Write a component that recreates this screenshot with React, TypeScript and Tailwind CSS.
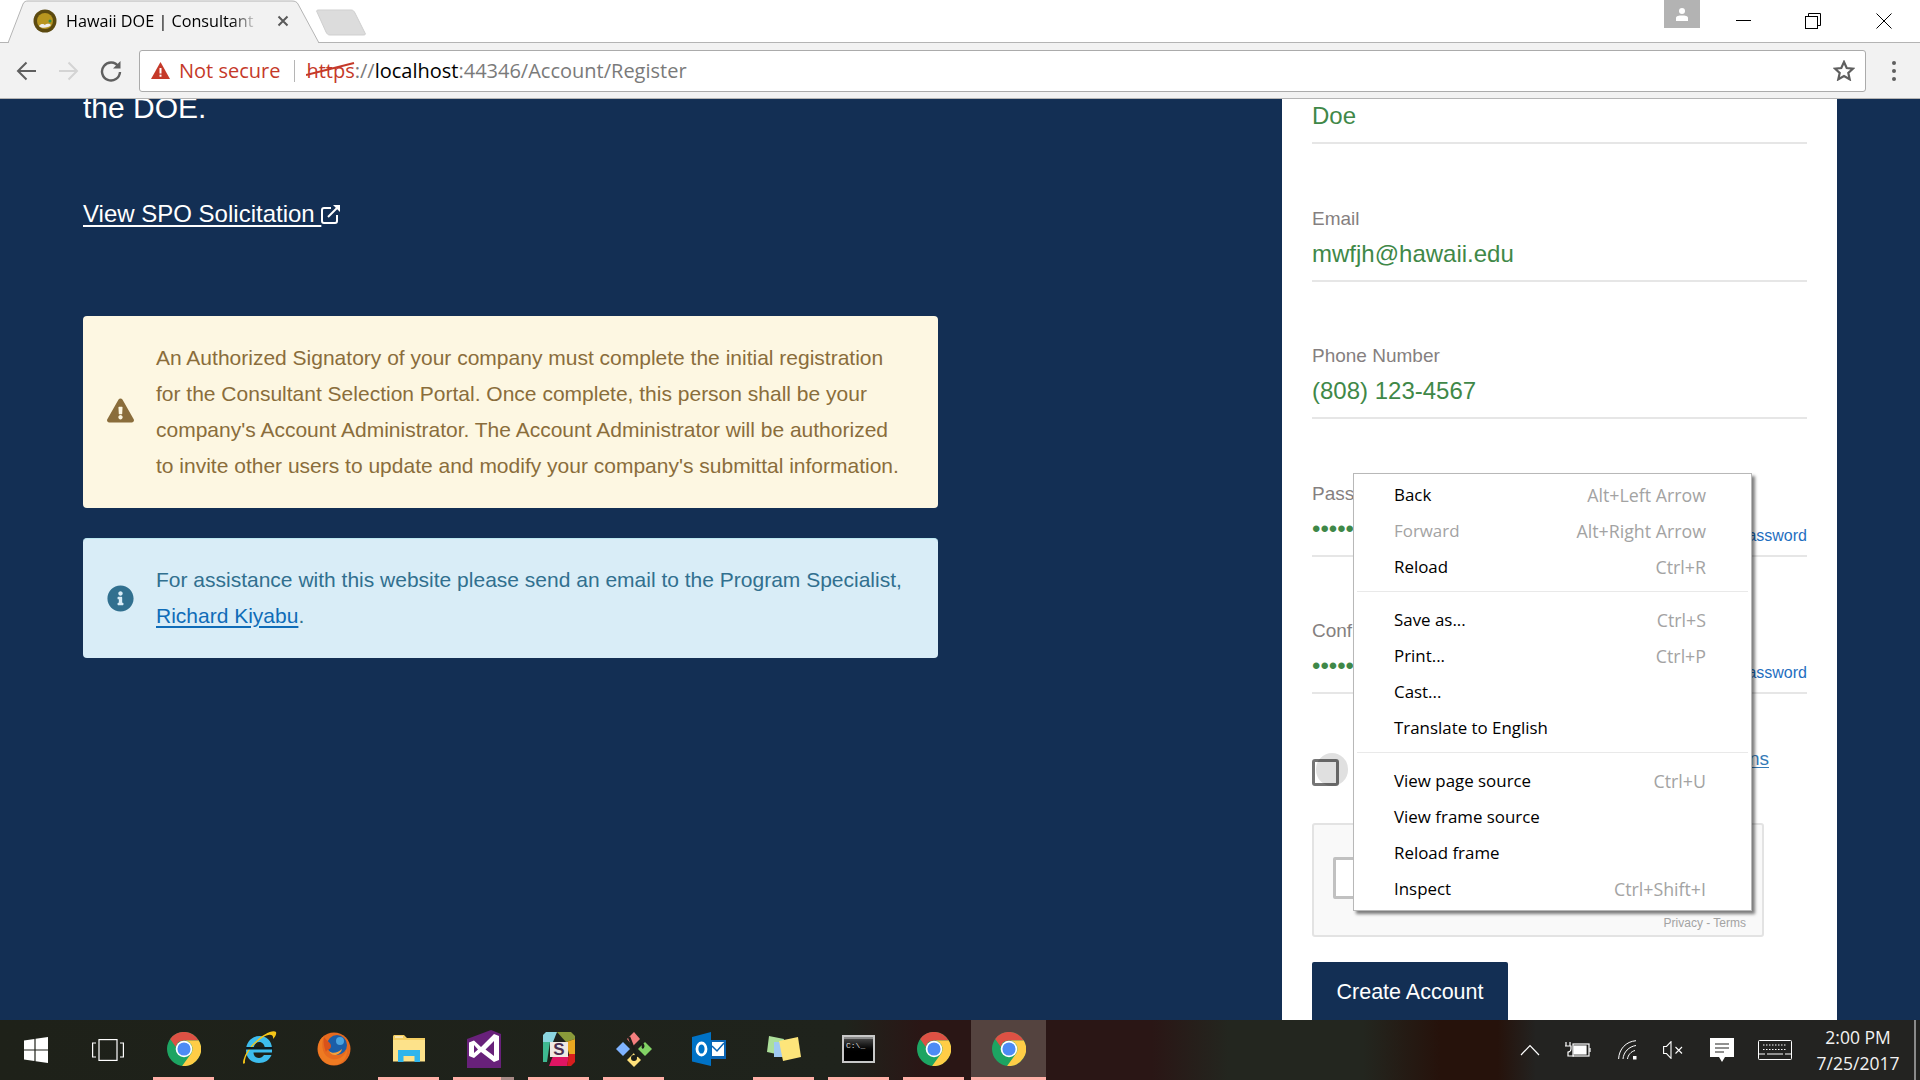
import React from "react";
import { FaExclamationTriangle, FaInfoCircle } from "react-icons/fa";

const uiFont = "font-['Open_Sans','Noto_Sans',sans-serif]";

function ChromeIcon() {
  return (
    <svg width="34" height="34" viewBox="0 0 32 32">
      <circle cx="16" cy="16" r="16" fill="#1da462" />
      <path d="M3 6.6A16 16 0 0 1 29.9 8L16 8A8 8 0 0 0 8.3 14Z" fill="#dd5144" />
      <path d="M29.9 8A16 16 0 0 1 14.2 31.9L22.9 20A8 8 0 0 0 16 8Z" fill="#ffcd46" />
      <circle cx="16" cy="16" r="7.8" fill="#fff" />
      <circle cx="16" cy="16" r="6.2" fill="#4c8bf5" />
    </svg>
  );
}

function WindowsIcon() {
  return (
    <svg width="24" height="26" viewBox="0 0 24 26" fill="#fff">
      <path d="M0 3.6 10.4 2V12.4H0Z" />
      <path d="M11.6 1.8 24 0V12.4H11.6Z" />
      <path d="M0 13.6H10.4V24L0 22.4Z" />
      <path d="M11.6 13.6H24V26L11.6 24.2Z" />
    </svg>
  );
}

function TaskViewIcon() {
  return (
    <svg width="32" height="22" viewBox="0 0 32 22" fill="none" stroke="#fff" strokeWidth="1.2">
      <rect x="7" y="0.6" width="18" height="20.8" />
      <path d="M4 4H0.6V18H4M28 4H31.4V18H28" />
    </svg>
  );
}

function IeIcon() {
  return (
    <svg width="36" height="38" viewBox="0 0 36 38">
      <path d="M31 18.5C31 10.5 25 6 18.500 6C10.500 6 5 12.500 5 20C5 28 10.500 33 18 33C24 33 28.500 30 30.500 25H23C21.500 27 20 28 18 28C15 28 12.500 26 12.500 22.500H31ZM12.800 17.500C13.300 14.500 15.500 12 18.300 12C21.200 12 23.500 14.500 23.800 17.500Z" fill="#3dbdee" />
      <path d="M4 33C0 37 2 25 11 15C20 5 32 -1 35 2C36 5 33 8 32 9C33 4 28 3 21 8C12 14 3 26 4 33Z" fill="#f5c518" />
      <rect x="5" y="17" width="27" height="2.500" fill="#0e1a20" />
    </svg>
  );
}

function FirefoxIcon() {
  return (
    <svg width="34" height="34" viewBox="0 0 34 34">
      <circle cx="17" cy="17" r="16.500" fill="#e66a1f" />
      <circle cx="20" cy="13" r="10" fill="#1c5ea8" />
      <circle cx="23" cy="9" r="4" fill="#4aa3df" />
      <path d="M7 4C3 14 6 25 15 27C22 28.500 28 24 30 17C31 24 26 33 17 33C7 33 1 25 1 17C1 11 3 7 7 4Z" fill="#ee7a22" />
      <path d="M7 5C9 9 14 10 14 14C14 18 10 17 9 20C7 15 6 10 7 5Z" fill="#d9521b" />
      <path d="M12 19C15 22 21 21 25 17C24 23 15 26 12 19Z" fill="#f7a03a" />
    </svg>
  );
}

function ExplorerIcon() {
  return (
    <svg width="32" height="28" viewBox="0 0 32 28">
      <path d="M0 1.500C0 .7.700 0 1.500 0H11L14 3H32V26H0Z" fill="#f4cf63" />
      <path d="M0 5H32V26.500H0Z" fill="#fde28a" />
      <rect x="2" y="1.500" width="8" height="1" fill="#fff" />
      <path d="M5 27V15H27V27H21.500V21H10.500V27Z" fill="#2fb5ec" />
    </svg>
  );
}

function VsIcon() {
  return (
    <svg width="34" height="38" viewBox="0 0 34 38">
      <path d="M0 9 24 0 34 4V38H0Z" fill="#68217a" />
      <path d="M2 12.500 7 10.500 14 17 27 4 32 6V30L27 32 14 22 7 28 2 26ZM7 15V23L11 19.500ZM27 11 18.500 19.500 27 26Z" fill="#fff" />
    </svg>
  );
}

function SlackIcon() {
  return (
    <svg width="32" height="34" viewBox="0 0 32 34">
      <path d="M3 0H14L10 10H0V3Z" fill="#8bd5e0" />
      <path d="M0 10H7L4 30H0Z" fill="#3eb991" />
      <path d="M14 0H28L32 4V7L23 10Z" fill="#8a9a3a" />
      <path d="M23 10 32 7V22L26 22Z" fill="#e9a820" />
      <path d="M10 24H26L24 34H6Z" fill="#e01563" />
      <path d="M26 22H32V30L28 34H24Z" fill="#d81e1e" />
      <rect x="7" y="10" width="18" height="15" fill="#efe9e3" />
      <text x="16" y="23" textAnchor="middle" fontSize="17" fontWeight="700" fill="#4a2f50" fontFamily="Liberation Sans">S</text>
    </svg>
  );
}

function GitIcon() {
  return (
    <svg width="36" height="36" viewBox="0 0 36 36">
      <path d="M5 8 12 1 18 8 11 15Z" transform="translate(6 0)" fill="#f47f7f" />
      <path d="M0 18 7 11 14 18 7 25Z" fill="#7fb3ff" />
      <path d="M22 18 29 11 36 18 29 25Z" fill="#82d365" />
      <path d="M11 29 18 22 25 29 18 36Z" fill="#ffe17a" />
      <path d="M13 6 21 26M19 28H17M23 14C26 11 29 15 26 17" stroke="#1b1d18" strokeWidth="2.500" fill="none" />
      <circle cx="18" cy="27" r="3" fill="#1b1d18" />
    </svg>
  );
}

function OutlookIcon() {
  return (
    <svg width="34" height="34" viewBox="0 0 34 34">
      <rect x="18" y="8" width="16" height="19" fill="#0a64b4" />
      <rect x="20" y="10" width="12" height="14" fill="#fff" />
      <path d="M20 14 25 19 32 11" stroke="#0a64b4" strokeWidth="1.500" fill="none" />
      <path d="M0 5 19 0V34L0 29.500Z" fill="#0072c6" />
      <ellipse cx="9.500" cy="17" rx="4.500" ry="6" fill="none" stroke="#fff" strokeWidth="2.800" />
    </svg>
  );
}

function NotesIcon() {
  return (
    <svg width="34" height="28" viewBox="0 0 34 28">
      <path d="M2 1 17 4 14 20 0 17Z" fill="#acdf9a" />
      <path d="M7 7H20V22H7Z" fill="#9fc9f2" />
      <path d="M12 6 31 2 34 22 16 26Z" fill="#fde57a" />
    </svg>
  );
}

function CmdIcon() {
  return (
    <div className="w-[33px] h-[28px] bg-black border-2 border-[#c8c8c8] flex flex-col">
      <div className="h-[2px] bg-[#8a8a8a]" />
      <div className="text-[#ddd] text-[8px] leading-[14px] pl-[2px] font-['Liberation_Mono',monospace] bg-gradient-to-b from-[#444] to-black h-[14px]">C:\_</div>
    </div>
  );
}

function TaskSlot({
  icon,
  running = false,
  active = false,
  stacked = false,
}: {
  icon: React.ReactNode;
  running?: boolean;
  active?: boolean;
  stacked?: boolean;
}) {
  return (
    <div className={`w-[75px] h-full flex flex-col items-center ${active ? "bg-[#54433f]" : ""}`}>
      <div className="flex-1 flex items-center justify-center">{icon}</div>
      <div
        className={`h-[3px] ${active ? "w-full" : "w-[61px]"} ${running ? "bg-[#ffb0a8]" : ""} ${
          stacked ? "bg-[linear-gradient(90deg,#ffb0a8_78%,#a88a86_78%)]" : ""
        }`}
      />
    </div>
  );
}

function Taskbar() {
  return (
    <div className="h-[60px] shrink-0 flex bg-[linear-gradient(90deg,#1e2119_0%,#1f231c_44%,#2a1615_48%,#2a1615_60%,#23261f_64%,#23261f_71%,#26120b_75%,#26120b_78%,#232321_80%,#232321_100%)] relative z-10">
      <div className="w-[72px] flex items-center justify-center"><WindowsIcon /></div>
      <div className="w-[74px] pr-[2px] flex items-center justify-center"><TaskViewIcon /></div>
      <TaskSlot icon={<ChromeIcon />} running />
      <TaskSlot icon={<IeIcon />} />
      <TaskSlot icon={<FirefoxIcon />} />
      <TaskSlot icon={<ExplorerIcon />} running />
      <TaskSlot icon={<VsIcon />} running stacked />
      <TaskSlot icon={<SlackIcon />} running />
      <TaskSlot icon={<GitIcon />} running />
      <TaskSlot icon={<OutlookIcon />} />
      <TaskSlot icon={<NotesIcon />} running />
      <TaskSlot icon={<CmdIcon />} running />
      <TaskSlot icon={<ChromeIcon />} running />
      <TaskSlot icon={<ChromeIcon />} running active />

      <div className="ml-auto flex items-center text-white">
        <div className="w-[48px] flex justify-center">
          <svg width="20" height="12" viewBox="0 0 20 12" fill="none" stroke="#fff" strokeWidth="1.200"><path d="M1 11 10 1.500 19 11" /></svg>
        </div>
        <div className="w-[48px] flex justify-center">
          <svg width="26" height="18" viewBox="0 0 26 18" fill="none" stroke="#fff" strokeWidth="1.200">
            <path d="M1 1V5M5 1V5M0 5H6V8C6 10 4 11 3 11V15H9" />
            <rect x="8" y="3" width="16" height="12" />
            <rect x="9" y="5" width="12" height="8" fill="#fff" />
            <path d="M25 7V11" />
          </svg>
        </div>
        <div className="w-[48px] pl-[4px] flex justify-center">
          <svg width="20" height="20" viewBox="0 0 20 20" fill="none" stroke="#fff" strokeWidth="1">
            <path d="M.6 19C1 9 8 1.500 18 .7M5 19C5.500 12 11 6.500 18 5.500M9.500 19C10 15 13 11.500 17 10.500" />
            <rect x="15" y="16" width="3.500" height="3.500" fill="#fff" stroke="none" />
          </svg>
        </div>
        <div className="w-[46px] flex justify-center">
          <svg width="20" height="18" viewBox="0 0 20 18" fill="none" stroke="#fff" strokeWidth="1.100">
            <path d="M8 .7V17.300L3.500 12.500H.6V5.500H3.500Z" />
            <path d="M12.500 6 19 12.500M19 6 12.500 12.500" />
          </svg>
        </div>
        <div className="w-[52px] flex justify-center">
          <svg width="24" height="24" viewBox="0 0 24 24">
            <path d="M0 0H24V19H15L12 24 9 19H0Z" fill="#fff" />
            <path d="M5 6H19M5 10H19M5 14H14" stroke="#232321" strokeWidth="1.200" />
          </svg>
        </div>
        <div className="w-[54px] flex justify-center">
          <svg width="34" height="20" viewBox="0 0 34 20" fill="none" stroke="#fff" strokeWidth="1">
            <rect x=".5" y=".5" width="33" height="19" rx="1" />
            <path d="M5 5H29M5 9.500H29" strokeDasharray="1.500 1.500" />
            <path d="M1 14H7M9 14H25M27 14H33" />
          </svg>
        </div>
        <div className={`w-[112px] text-center text-[17.500px] leading-[26px] text-[#f2f2f2] ${uiFont}`}>
          <div>2:00 PM</div>
          <div>7/25/2017</div>
        </div>
        <div className="w-[6px] h-full flex">
          <div className="w-[2px] h-full bg-[#8a8a8a]" />
        </div>
      </div>
    </div>
  );
}

function BrowserChrome() {
  return (
    <div className="shrink-0">
      <div className="h-[43px] bg-white border-b border-[#b4b4b4] flex items-start relative">
        <div className="relative w-[320px] h-[43px] -mb-px">
          <svg width="320" height="43" viewBox="0 0 320 43" className="block">
            <path d="M8 43 23 4C24 1.500 26 1 28 1H292C295 1 297 2 298 4L319 43Z" fill="#f2f2f2" stroke="#b4b4b4" />
            <rect x="9" y="42" width="309" height="2" fill="#f2f2f2" />
          </svg>
          <div className="absolute inset-0 flex items-center pl-[33px] pb-[1px]">
            <svg width="24" height="24" viewBox="0 0 24 24">
              <circle cx="12" cy="12" r="11.500" fill="#5c4a10" />
              <circle cx="12" cy="12" r="8" fill="#b8961f" />
              <path d="M6 17C8 14 11 15 12 16C14 14 17 15 18 16C16 19 8 20 6 17Z" fill="#eee" />
              <circle cx="17" cy="12" r="1.500" fill="#2f8f4e" />
            </svg>
            <div className={`ml-[9px] w-[192px] whitespace-nowrap overflow-hidden text-[16.200px] text-black ${uiFont} [mask-image:linear-gradient(90deg,#000_86%,transparent)]`}>
              Hawaii DOE | Consultant Selection Portal
            </div>
            <svg width="12" height="12" viewBox="0 0 12 12" className="ml-[19px]" stroke="#5a5a5a" strokeWidth="2"><path d="M1.500 1.500 10.500 10.500M10.500 1.500 1.500 10.500" /></svg>
          </div>
        </div>
        <svg width="52" height="27" viewBox="0 0 52 27" className="mt-[9px] -ml-[5px]">
          <path d="M2 3C1 1.500 2 1 4 1H36C38 1 39 2 40 4L50 24C51 25.500 50 26 48 26H15C13 26 12 25 11 23Z" fill="#dcdcdc" stroke="#cfcfcf" />
        </svg>
        <div className="ml-auto flex items-start">
          <div className="w-[36px] h-[28px] bg-[#b3b3b3] flex items-center justify-center mr-[8px]">
            <svg width="14" height="14" viewBox="0 0 14 14" fill="#fff"><circle cx="7" cy="4" r="3" /><path d="M1 14V11C1 9 4 8.500 7 8.500C10 8.500 13 9 13 11V14Z" /></svg>
          </div>
          <div className="w-[70px] flex justify-center pt-[20px]"><div className="w-[15px] h-px bg-black" /></div>
          <div className="w-[70px] flex justify-center pt-[13px]">
            <svg width="16" height="16" viewBox="0 0 16 16" fill="none" stroke="#000"><path d="M3.500 3V.5H15.500V12.500H12.500" /><rect x=".5" y="3.500" width="12" height="12" /></svg>
          </div>
          <div className="w-[72px] flex justify-center pt-[13px]">
            <svg width="16" height="16" viewBox="0 0 16 16" stroke="#000"><path d="M.5.5 15.500 15.500M15.500.5 .5 15.500" /></svg>
          </div>
        </div>
      </div>
      <div className="h-[56px] bg-[#f2f2f2] border-b border-[#b4b4b4] flex items-center">
        <div className="w-[139px] flex items-center pl-[16px] gap-[21px]">
          <svg width="21" height="20" viewBox="0 0 21 20" fill="none" stroke="#5f5f5f" strokeWidth="2"><path d="M20 10H2M10.500 1.500 2 10 10.500 18.500" /></svg>
          <svg width="21" height="20" viewBox="0 0 21 20" fill="none" stroke="#d4d4d4" strokeWidth="2"><path d="M1 10H19M10.500 1.500 19 10 10.500 18.500" /></svg>
          <svg width="22" height="22" viewBox="0 0 22 22" fill="none" stroke="#5f5f5f" strokeWidth="2.400">
            <path d="M18.500 6.500A9 9 0 1 0 20 12" />
            <path d="M20.500 1V8.500H13Z" fill="#5f5f5f" stroke="none" />
          </svg>
        </div>
        <div className={`w-[1727px] h-[42px] bg-white border border-[#ababab] rounded-[3px] flex items-center ${uiFont} text-[20px]`}>
          <svg width="19" height="17" viewBox="0 0 19 17" className="ml-[11px]">
            <path d="M9.500 0 19 17H0Z" fill="#c53929" />
            <rect x="8.500" y="6" width="2" height="5.500" fill="#fff" />
            <rect x="8.500" y="12.700" width="2" height="2" fill="#fff" />
          </svg>
          <span className="ml-[9px] text-[#c53929]">Not secure</span>
          <div className="w-px h-[22px] bg-[#b5b5b5] ml-[14px] mr-[11px]" />
          <span className="relative text-[#c53929]">
            https
            <svg width="52" height="16" viewBox="0 0 52 16" className="absolute left-0 top-[5px]" stroke="#c53929" strokeWidth="2"><path d="M0 14 48 2" /></svg>
          </span>
          <span className="text-[#7a7a7a]">://</span>
          <span className="text-black">localhost</span>
          <span className="text-[#7a7a7a]">:44346/Account/Register</span>
          <svg width="22" height="21" viewBox="0 0 22 21" fill="none" stroke="#5f5f5f" strokeWidth="2.200" className="ml-auto mr-[10px]">
            <path d="M11 2 13.700 8 20 8.700 15.300 13 16.700 19.300 11 16 5.300 19.300 6.700 13 2 8.700 8.300 8Z" />
          </svg>
        </div>
        <div className="flex-1 flex flex-col items-center gap-[4px] pl-[1px]">
          <div className="w-[4px] h-[4px] rounded-full bg-[#5f5f5f]" />
          <div className="w-[4px] h-[4px] rounded-full bg-[#5f5f5f]" />
          <div className="w-[4px] h-[4px] rounded-full bg-[#5f5f5f]" />
        </div>
      </div>
    </div>
  );
}

function Field({
  label,
  value,
  extra,
  first = false,
}: {
  label?: string;
  value: string;
  extra?: string;
  first?: boolean;
}) {
  return (
    <div className={`border-b-2 border-[#e6e6e6] pb-[8px] ${first ? "-mt-[1px]" : "mt-[62.500px]"}`}>
      {label && <div className="h-[24px] leading-[24px] text-[19px] text-[#857f80] mb-[5px]">{label}</div>}
      <div className="flex justify-between h-[36px] leading-[36px]">
        <span className="text-[24px] text-[#3f8848]">{value}</span>
        {extra && <a className="text-[16px] text-[#1f6fbf] pt-[7px]">{extra}</a>}
      </div>
    </div>
  );
}

function MenuItem({ label, keys, disabled = false }: { label: string; keys?: string; disabled?: boolean }) {
  return (
    <div className="h-[36px] flex items-center justify-between">
      <span className={disabled ? "text-[#a3a3a3]" : "text-black"}>{label}</span>
      {keys && <span className="text-[#a3a3a3] text-[17.800px]">{keys}</span>}
    </div>
  );
}

function ContextMenu() {
  return (
    <div className={`absolute left-[1353px] top-[374px] w-[399px] h-[438px] bg-white border border-[#b8b8b8] pt-[3px] shadow-[3px_3px_3px_rgba(0,0,0,0.5)] text-[16.900px] ${uiFont} z-10`}>
      <div className="pl-[40px] pr-[45px]">
        <MenuItem label="Back" keys="Alt+Left Arrow" />
        <MenuItem label="Forward" keys="Alt+Right Arrow" disabled />
        <MenuItem label="Reload" keys="Ctrl+R" />
      </div>
      <div className="mx-[3px] mt-[6px] mb-[10px] h-px bg-[#e9e9e9]" />
      <div className="pl-[40px] pr-[45px]">
        <MenuItem label="Save as..." keys="Ctrl+S" />
        <MenuItem label="Print..." keys="Ctrl+P" />
        <MenuItem label="Cast..." />
        <MenuItem label="Translate to English" />
      </div>
      <div className="mx-[3px] mt-[6px] mb-[10px] h-px bg-[#e9e9e9]" />
      <div className="pl-[40px] pr-[45px]">
        <MenuItem label="View page source" keys="Ctrl+U" />
        <MenuItem label="View frame source" />
        <MenuItem label="Reload frame" />
        <MenuItem label="Inspect" keys="Ctrl+Shift+I" />
      </div>
    </div>
  );
}

export default function App() {
  return (
    <div className="w-[1920px] h-[1080px] flex flex-col overflow-hidden font-['Liberation_Sans',Arial,sans-serif]">
      <BrowserChrome />
      <div className="flex-1 min-h-0 relative bg-[#132f54] flex overflow-hidden">
        <div className="w-[1282px] shrink-0 pl-[83px]">
          <div className="-mt-[12px] text-[30px] leading-[42px] text-white">the DOE.</div>
          <a className="mt-[70px] block text-[24px] leading-[30px] text-white">
            <span className="underline underline-offset-[3px]">View SPO Solicitation </span>
            <svg width="20" height="20" viewBox="0 0 20 20" fill="none" stroke="#fff" strokeWidth="2" className="inline-block align-[-2px]">
              <path d="M16 11V17C16 18 15 19 14 19H3C2 19 1 18 1 17V6C1 5 2 4 3 4H10" />
              <path d="M7 13 18 2" />
              <path d="M12 1H19V8Z" fill="#fff" stroke="none" />
            </svg>
          </a>
          <div className="mt-[87px] w-[855px] h-[192px] rounded-[4px] bg-[#fdf7e2] text-[#8a6d3b] flex items-center pl-[24px] text-[21px] leading-[36px]">
            <FaExclamationTriangle className="w-[27px] h-[27px] shrink-0 mr-[22px] mb-[3px]" />
            <p className="whitespace-nowrap">
              An Authorized Signatory of your company must complete the initial registration<br />
              for the Consultant Selection Portal. Once complete, this person shall be your<br />
              company's Account Administrator. The Account Administrator will be authorized<br />
              to invite other users to update and modify your company's submittal information.
            </p>
          </div>
          <div className="mt-[30px] w-[855px] h-[120px] rounded-[4px] bg-[#d9edf7] border-t border-[#bce8f1] text-[#31708f] flex items-center pl-[24px] pb-[1px] text-[21px] leading-[36px]">
            <FaInfoCircle className="w-[27px] h-[27px] shrink-0 mr-[22px]" />
            <p className="whitespace-nowrap">
              For assistance with this website please send an email to the Program Specialist,<br />
              <a className="text-[#0f6cb8] underline underline-offset-[3px]">Richard Kiyabu</a>.
            </p>
          </div>
        </div>

        <div className="w-[555px] shrink-0 bg-white px-[30px] overflow-hidden">
          <Field value="Doe" first />
          <Field label="Email" value="mwfjh@hawaii.edu" />
          <Field label="Phone Number" value="(808) 123-4567" />
          <Field label="Password" value="••••••••••" extra="Show password" />
          <Field label="Confirm Password" value="••••••••••" extra="Show password" />

          <div className="mt-[65px] w-[457px] h-[27px] flex justify-between relative">
            <div className="w-[27px] h-[27px] border-[3px] border-[#757575] rounded-[3px]" />
            <div className="absolute left-[4px] -top-[6px] w-[32px] h-[33px] rounded-full bg-black/12" />
            <a className="text-[19px] leading-[24px] -mt-[12px] text-[#337ab7] underline underline-offset-2">Terms and Conditions</a>
          </div>

          <div className="mt-[37px] w-[452px] h-[114px] bg-[#f9f9f9] border-2 border-[#e3e3e3] rounded-[3px] flex flex-col">
            <div className="pl-[19px] pt-[32px]">
              <div className="w-[42px] h-[42px] bg-white border-[3px] border-[#c1c1c1] rounded-[2px]" />
            </div>
            <div className="text-[12px] leading-[14px] text-[#a3a3a3] self-end pr-[16px] mt-[17px]">Privacy - Terms</div>
          </div>

          <button className="mt-[25px] w-[196px] h-[62px] bg-[#132f54] text-white text-[21.500px] rounded-t-[2px] pb-[1px]">Create Account</button>
        </div>

        <div className="flex-1" />
        <ContextMenu />
      </div>
      <Taskbar />
    </div>
  );
}
